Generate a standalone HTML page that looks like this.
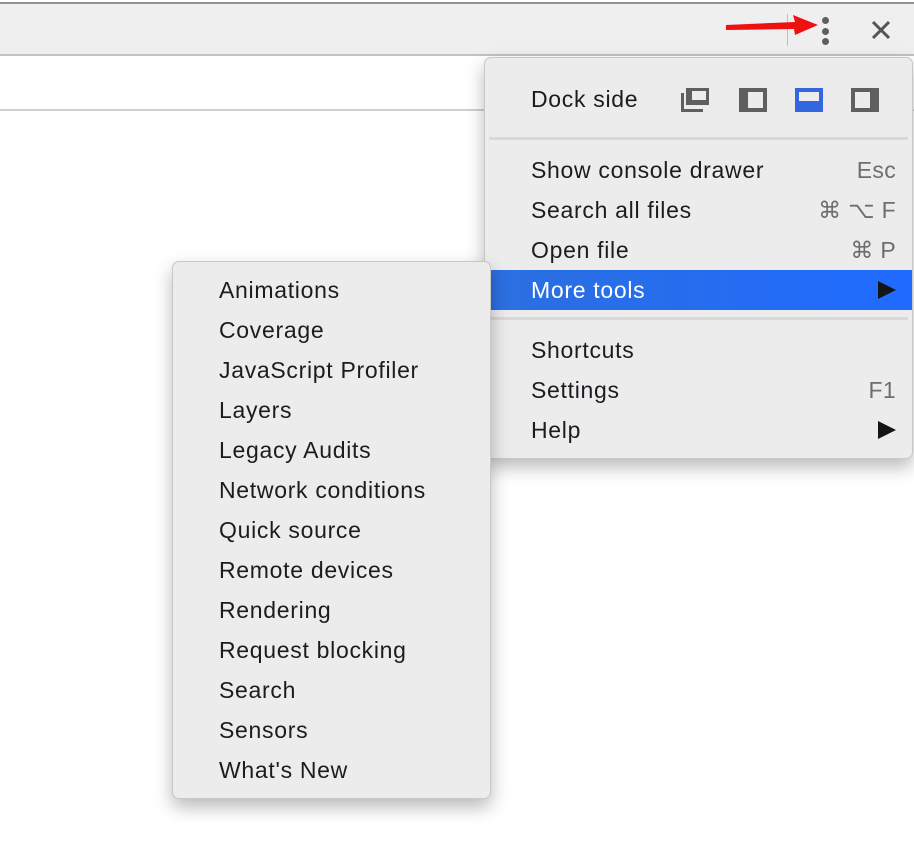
<!DOCTYPE html>
<html><head><style>
*{margin:0;padding:0;box-sizing:border-box}
body{width:914px;height:844px;background:#fff;position:relative;overflow:hidden;font-family:"Liberation Sans",Helvetica,Arial,sans-serif;color:#1a1c20}
.topline{position:absolute;left:0;top:2px;width:914px;height:2px;background:#929292}
.bar{position:absolute;left:0;top:4px;width:914px;height:52px;background:#efefef;border-bottom:2px solid #c2c2c2}
.line2{position:absolute;left:0;top:109px;width:914px;height:2px;background:#d0d0d0}
.menu{position:absolute;background:#ececec;border:1px solid #c8c8c8;border-radius:7px;box-shadow:0 8px 18px rgba(0,0,0,.28)}
.item{position:absolute;left:0;right:0;height:40px;line-height:40px;font-size:23px;letter-spacing:0.7px;padding-left:46px}
.sc{position:absolute;right:16px;top:0;color:#6e6e6e;letter-spacing:0.3px}
.sep{position:absolute;left:4px;right:4px;height:3px;background:#d8d8d8}
.hl{background:linear-gradient(90deg,#2c6fe0,#1f6bff);color:#fff}
.tri{position:absolute;right:16px;top:11px;width:0;height:0;border-left:18px solid #151515;border-top:9px solid transparent;border-bottom:9px solid transparent}
</style></head><body>
<div class="topline"></div>
<div class="bar"></div>
<div class="line2"></div>
<div style="position:absolute;left:787px;top:14px;width:1px;height:32px;background:#c0c0c0"></div>
<svg style="position:absolute;left:720px;top:10px" width="100" height="30"><path d="M6 15 L75 12 L73 5 L98 15 L75 25 L74 19 L6 20 Z" fill="#ee1111"/></svg>
<div style="position:absolute;left:822px;top:17px;width:7px;height:7px;border-radius:4px;background:#5f5f5f"></div>
<div style="position:absolute;left:822px;top:28px;width:7px;height:7px;border-radius:4px;background:#5f5f5f"></div>
<div style="position:absolute;left:822px;top:38px;width:7px;height:7px;border-radius:4px;background:#5f5f5f"></div>
<svg style="position:absolute;left:870px;top:19px" width="22" height="22"><path d="M3 3L19 19M19 3L3 19" stroke="#555" stroke-width="3"/></svg>

<div class="menu" style="left:484px;top:57px;width:429px;height:402px">
  <div class="item" style="top:21px">Dock side</div>
  <svg style="position:absolute;left:196px;top:29px" width="200" height="26">
    <rect x="5" y="1" width="23" height="17" fill="#5f5f5f"/><rect x="11" y="4" width="14" height="9" fill="#ececec"/>
    <path d="M1.5 6V23.5H22" stroke="#5f5f5f" stroke-width="3" fill="none"/>
    <rect x="58" y="1" width="28" height="24" fill="#5f5f5f"/><rect x="67" y="5" width="15" height="16" fill="#ececec"/>
    <rect x="114" y="1" width="28" height="24" fill="#3466e0"/><rect x="118" y="5" width="20" height="9" fill="#ececec"/>
    <rect x="170" y="1" width="28" height="24" fill="#5f5f5f"/><rect x="174" y="5" width="15" height="16" fill="#ececec"/>
  </svg>
  <div class="sep" style="top:79px"></div>
  <div class="item" style="top:92px">Show console drawer<span class="sc">Esc</span></div>
  <div class="item" style="top:132px">Search all files<span class="sc">⌘ ⌥ F</span></div>
  <div class="item" style="top:172px">Open file<span class="sc">⌘ P</span></div>
  <div class="item hl" style="top:212px;left:6px;right:0;padding-left:40px">More tools<span class="tri"></span></div>
  <div class="sep" style="top:259px"></div>
  <div class="item" style="top:272px">Shortcuts</div>
  <div class="item" style="top:312px">Settings<span class="sc">F1</span></div>
  <div class="item" style="top:352px">Help<span class="tri"></span></div>
</div>

<div class="menu" style="left:172px;top:261px;width:319px;height:538px">
  <div class="item" style="top:8px">Animations</div>
  <div class="item" style="top:48px">Coverage</div>
  <div class="item" style="top:88px">JavaScript Profiler</div>
  <div class="item" style="top:128px">Layers</div>
  <div class="item" style="top:168px">Legacy Audits</div>
  <div class="item" style="top:208px">Network conditions</div>
  <div class="item" style="top:248px">Quick source</div>
  <div class="item" style="top:288px">Remote devices</div>
  <div class="item" style="top:328px">Rendering</div>
  <div class="item" style="top:368px">Request blocking</div>
  <div class="item" style="top:408px">Search</div>
  <div class="item" style="top:448px">Sensors</div>
  <div class="item" style="top:488px">What's New</div>
</div>
</body></html>
